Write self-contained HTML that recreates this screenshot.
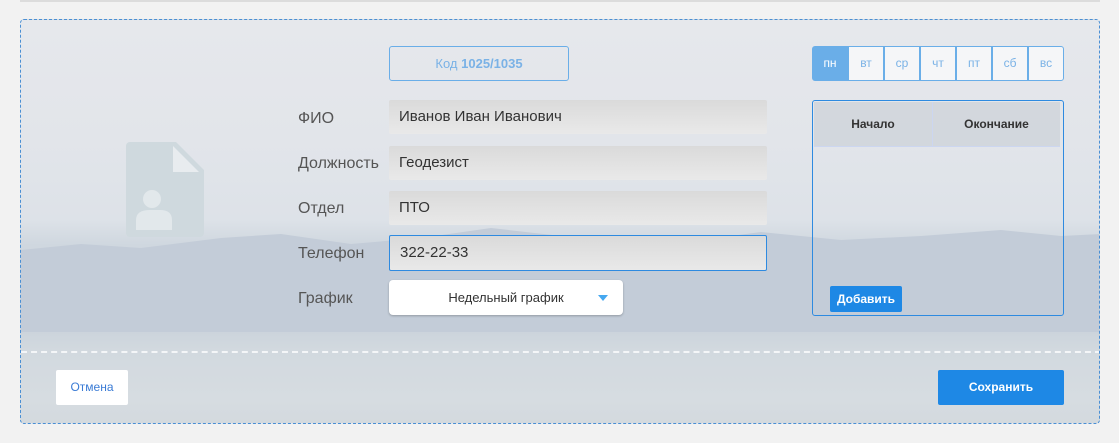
<!DOCTYPE html>
<html><head><meta charset="utf-8"><style>
*{box-sizing:border-box;margin:0;padding:0}
body{width:1119px;height:443px;background:#f2f2f2;position:relative;overflow:hidden;font-family:"Liberation Sans",sans-serif}
.top{position:absolute;left:20px;top:0;width:1080px;height:2px;background:#dcdcdc}
.panel{position:absolute;left:20px;top:19px;width:1080px;height:405px;border:1px dashed #4a8fd4;border-radius:4px;overflow:hidden;
background:linear-gradient(180deg,#e6e8ec 0px,#e2e5ea 120px,#dde2e8 200px,#cfd7df 225px,#c8d1db 300px,#ccd4dc 312px,#d2d9df 330px,#d6dce1 380px,#d3d9de 405px)}
.mtn{position:absolute;left:0;top:200px;width:1080px;height:112px}
.abs{position:absolute}
.lbl{position:absolute;left:298px;font-size:16px;color:#555}
.inp{position:absolute;left:389px;width:378px;height:34px;background:linear-gradient(#dadada,#e9e9e9);border-radius:2px;font-size:15px;color:#333;padding:9px 10px;line-height:16px}
.day{position:absolute;top:46px;width:36px;height:35px;border:1px solid #6aaee8;background:#f5f6f8;color:#7ab2e6;font-size:12px;text-align:center;line-height:33px}
</style></head><body>
<div class="top"></div>
<div class="panel">
<svg class="mtn" viewBox="0 0 1080 112" preserveAspectRatio="none"><path d="M0 30 L60 24 L120 28 L200 18 L260 14 L330 24 L400 18 L470 8 L540 16 L600 22 L680 20 L740 12 L820 20 L900 16 L980 10 L1040 16 L1080 14 L1080 112 L0 112Z" fill="#c3ccd8"/></svg>
<div class="abs" style="left:0;top:331px;width:1080px;border-top:2px dashed #f4f6f8"></div>
</div>
<svg class="abs" style="left:126px;top:142px" width="78" height="95" viewBox="0 0 78 95"><path d="M4 0 H50 L78 28 V91 a4 4 0 0 1 -4 4 H4 a4 4 0 0 1 -4 -4 V4 a4 4 0 0 1 4 -4Z" fill="#cfd9de"/><path d="M47 4 V30 H73Z" fill="#e8ecef"/><circle cx="26" cy="57" r="9" fill="#e2e8eb"/><path d="M8 78 Q8 68 22 68 H32 Q44 68 44 78 V88 H8Z" fill="#e2e8eb" transform="translate(2,0)"/></svg>
<div class="abs" style="left:389px;top:46px;width:180px;height:35px;border:1px solid #6aaee8;border-radius:3px;text-align:center;line-height:33px;font-size:13px;color:#7ab2e6">Код <b>1025/1035</b></div>
<div class="lbl" style="top:110px">ФИО</div>
<div class="lbl" style="top:155px">Должность</div>
<div class="lbl" style="top:200px">Отдел</div>
<div class="lbl" style="top:245px">Телефон</div>
<div class="lbl" style="top:290px">График</div>
<div class="inp" style="top:100px">Иванов Иван Иванович</div>
<div class="inp" style="top:146px">Геодезист</div>
<div class="inp" style="top:191px">ПТО</div>
<div class="inp" style="top:235px;height:36px;border:1px solid #2e8ae0;padding-top:9px">322-22-33</div>
<div class="abs" style="left:389px;top:280px;width:234px;height:35px;background:#fff;border-radius:4px;box-shadow:0 1px 2px rgba(0,0,0,.25);font-size:13px;color:#333;text-align:center;line-height:35px">Недельный график<span style="position:absolute;left:209px;top:15px;width:0;height:0;border-left:5px solid transparent;border-right:5px solid transparent;border-top:6px solid #45a8f0"></span></div>
<div class="day" style="left:812px;background:#6aaee8;color:#fff;border-radius:3px 0 0 3px">пн</div>
<div class="day" style="left:848px">вт</div>
<div class="day" style="left:884px">ср</div>
<div class="day" style="left:920px">чт</div>
<div class="day" style="left:956px">пт</div>
<div class="day" style="left:992px">сб</div>
<div class="day" style="left:1028px;border-radius:0 3px 3px 0">вс</div>
<div class="abs" style="left:812px;top:100px;width:252px;height:216px;border:1px solid #2e8ae0;border-radius:3px">
<div class="abs" style="left:1px;top:1px;width:119px;height:45px;background:rgba(200,205,212,.6);border-right:1px solid #ccd6f0;border-bottom:1px solid #ccd6f0;font-size:12px;font-weight:bold;color:#333;text-align:center;line-height:45px">Начало</div>
<div class="abs" style="left:120px;top:1px;width:127px;height:45px;background:rgba(200,205,212,.6);border-bottom:1px solid #ccd6f0;font-size:12px;font-weight:bold;color:#333;text-align:center;line-height:45px">Окончание</div>
<div class="abs" style="left:17px;top:185px;width:72px;height:26px;background:#1e88e5;border-radius:2px;color:#fff;font-size:12px;font-weight:bold;text-align:center;line-height:26px">Добавить</div>
</div>
<div class="abs" style="left:56px;top:370px;width:72px;height:35px;background:#fff;border-radius:2px;color:#3a7bd5;font-size:12px;text-align:center;line-height:35px">Отмена</div>
<div class="abs" style="left:938px;top:370px;width:126px;height:35px;background:#1e88e5;border-radius:2px;color:#fff;font-size:12px;font-weight:bold;text-align:center;line-height:35px">Сохранить</div>
</body></html>
